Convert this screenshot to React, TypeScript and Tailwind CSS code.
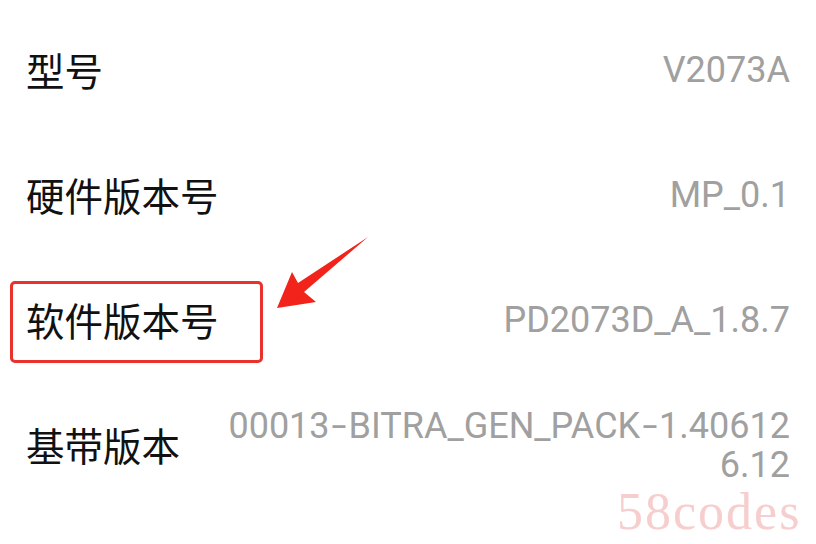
import React from "react";

const Dash = () => (
  <span className="inline-block px-[4.5px]">
    <span className="inline-block scale-x-150">-</span>
  </span>
);

const rows: { label: string; value: React.ReactNode; boxed?: boolean }[] = [
  { label: "型号", value: "V2073A" },
  { label: "硬件版本号", value: "MP_0.1" },
  { label: "软件版本号", value: "PD2073D_A_1.8.7", boxed: true },
  {
    label: "基带版本",
    value: (
      <>
        00013
        <Dash />
        BITRA_GEN_PACK
        <Dash />
        1.40612
        <br />
        6.12
      </>
    ),
  },
];

export default function App() {
  return (
    <div className="relative w-[816px] h-[544px] overflow-hidden bg-white">
      <div className="flex flex-col pt-[8px] pl-[26px] pr-[26px]">
        {rows.map((r, i) => (
          <div key={i} className="flex h-[125px] items-center justify-between">
            <div className="relative">
              <span
                className="text-[38.5px] leading-none text-[#111111]"
                style={{ fontFamily: '"Noto Sans CJK SC", "Noto Sans", sans-serif' }}
              >
                {r.label}
              </span>
              {r.boxed && (
                <div className="absolute left-[-16px] top-[-19px] h-[82px] w-[253px] rounded-[5px] border-[3px] border-[#e8322b]" />
              )}
            </div>
            <div
              className="text-right text-[36px] leading-[39px] text-[#a0a0a0]"
              style={{ fontFamily: 'Roboto, "Liberation Sans", sans-serif' }}
            >
              {r.value}
            </div>
          </div>
        ))}
      </div>

      <svg
        className="absolute left-0 top-0"
        width="816"
        height="544"
        viewBox="0 0 816 544"
      >
        <polygon
          points="368,237 304,292 316,302 277,308 292,272 298,283"
          fill="#f2231b"
        />
      </svg>

      <div
        className="absolute left-[617px] top-[486px] text-[52px] leading-none tracking-[2px] text-[#f7cece]"
        style={{ fontFamily: '"Liberation Serif", serif' }}
      >
        58codes
      </div>
    </div>
  );
}
